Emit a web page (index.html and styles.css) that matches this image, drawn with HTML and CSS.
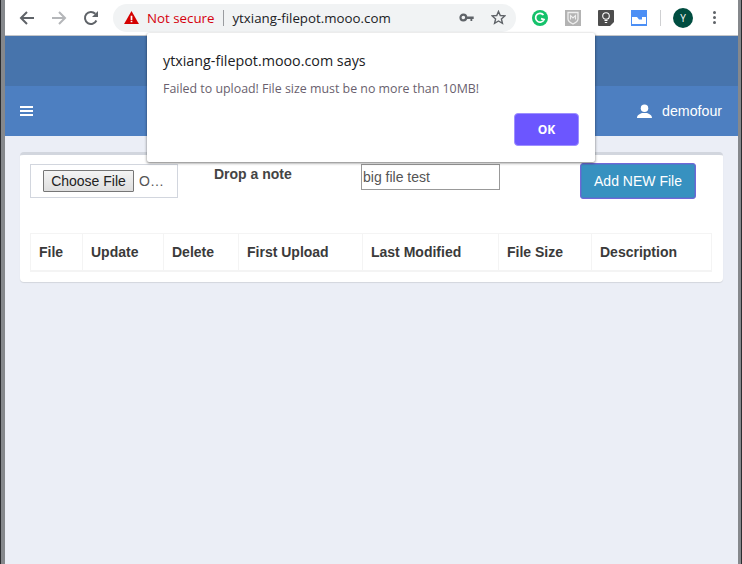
FILE: index.html
```html
<!DOCTYPE html>
<html lang="en">
<head>
  <meta charset="UTF-8" />
  <title>ytxiang-filepot.mooo.com</title>
  <link rel="stylesheet" href="styles.css">
</head>
<body>
  <div class="window">
    <div class="toolbar">
      <svg class="nav" viewBox="0 0 16 16" width="16" height="16"><path d="M15 8H2.5M8 2L2 8l6 6" fill="none" stroke="#5f6368" stroke-width="2"/></svg>
      <svg class="nav" viewBox="0 0 16 16" width="16" height="16"><path d="M1 8h12.5M8 2l6 6-6 6" fill="none" stroke="#b4b6b9" stroke-width="2"/></svg>
      <svg class="nav" viewBox="0 0 16 16" width="16" height="16"><path d="M13.4 10.5A6 6 0 1 1 12.3 3.8" fill="none" stroke="#5f6368" stroke-width="2"/><path d="M15 1v6H9z" fill="#5f6368"/></svg>
      <div class="omnibox">
        <svg class="warn" viewBox="0 0 16 14" width="15" height="13"><path d="M8 0l8 14H0z" fill="#d40000"/><path d="M7.1 5h1.8v4.6H7.1zM7.1 10.5h1.8v1.7H7.1z" fill="#fff"/></svg>
        <span class="not-secure">Not secure</span>
        <span class="url">ytxiang-filepot.mooo.com</span>
        <svg class="key" viewBox="0 0 16 10" width="15" height="9"><circle cx="4.5" cy="5" r="3.2" fill="none" stroke="#5f6368" stroke-width="2.4"/><path d="M8 3.8h8v3h-1.6v2h-2v-2H8z" fill="#5f6368"/></svg>
        <svg class="star" viewBox="0 0 16 16" width="15" height="15"><path d="M8 1.5l1.9 4.4 4.8.4-3.6 3.2 1.1 4.7L8 11.7l-4.2 2.5 1.1-4.7-3.6-3.2 4.8-.4z" fill="none" stroke="#5f6368" stroke-width="1.5"/></svg>
      </div>
      <div class="extensions">
        <svg viewBox="0 0 16 16" width="16" height="16"><circle cx="8" cy="8" r="8" fill="#15c26b"/><path d="M11.5 5A4.4 4.4 0 1 0 12 9.6L9 8.6" fill="none" stroke="#fff" stroke-width="1.7"/></svg>
        <svg viewBox="0 0 16 16" width="16" height="16"><path d="M0 0h16v16H0z" fill="#b3b3b3"/><path d="M3 2.500h10v6.500c0 2.500-2.500 3.800-5 5-2.500-1.200-5-2.500-5-5z" fill="none" stroke="#eee" stroke-width="1.300"/><path d="M5.500 9.500V5.500l2.500 2.500 2.500-2.500v4" fill="none" stroke="#eee" stroke-width="1.100"/></svg>
        <svg viewBox="0 0 16 16" width="16" height="16"><path d="M1 0h14a1 1 0 0 1 1 1v11l-4 4H1a1 1 0 0 1-1-1V1a1 1 0 0 1 1-1z" fill="#4d4d4d"/><circle cx="8" cy="6" r="3.300" fill="none" stroke="#fff" stroke-width="1.100"/><path d="M6.500 10.500h3M6.800 12.500h2.400" stroke="#fff" stroke-width="1.200"/></svg>
        <svg viewBox="0 0 16 16" width="16" height="16"><path d="M0 0h16v16H0z" fill="#4c8ff5"/><path d="M1 7h5l2 2.500h3V7h4v7H1z" fill="#fff"/></svg>
      </div>
      <span class="divider"></span>
      <span class="avatar">Y</span>
      <span class="kebab"><i></i><i></i><i></i></span>
    </div>

    <header class="brand-bar"></header>
    <nav class="user-bar">
      <span class="burger"><i></i><i></i><i></i></span>
      <span class="user">
        <svg viewBox="0 0 16 16" width="15" height="15"><circle cx="8" cy="4.500" r="4" fill="#fff"/><path d="M0 15c0-3.500 3-4.500 5.500-5.500h5C13 10.500 16 11.500 16 15z" fill="#fff"/></svg>
        demofour
      </span>
    </nav>

    <main class="content">
      <section class="card">
        <form class="upload-row">
          <div class="file-box">
            <span class="file-btn">Choose File</span>
            <span class="file-name">O…</span>
          </div>
          <label class="note-label">Drop a note</label>
          <input class="note-input" type="text" value="big file test">
          <button class="add-btn" type="button">Add NEW File</button>
        </form>
        <table class="files">
          <thead>
            <tr>
              <th class="c-file">File</th>
              <th class="c-update">Update</th>
              <th class="c-delete">Delete</th>
              <th class="c-first">First Upload</th>
              <th class="c-last">Last Modified</th>
              <th class="c-size">File Size</th>
              <th>Description</th>
            </tr>
          </thead>
        </table>
      </section>
    </main>

    <div class="dialog">
      <h2>ytxiang-filepot.mooo.com says</h2>
      <p>Failed to upload! File size must be no more than 10MB!</p>
      <div class="dialog-actions"><button type="button">OK</button></div>
    </div>
  </div>
</body>
</html>
```

FILE: styles.css
```css
html, body { margin: 0; height: 100%; }
body { font-family: "Liberation Sans", Arial, sans-serif; background: #2b2d30; overflow: hidden; padding: 0 1px; }
.window { position: relative; height: 564px; box-sizing: border-box; margin: 0; border-left: 4px solid #85888c; border-right: 3px solid #85888c; display: flex; flex-direction: column; background: #ebeef6; }

.toolbar { height: 36px; flex: none; box-sizing: border-box; background: #fff; border-bottom: 1px solid #c4c6c9; display: flex; align-items: center; padding-left: 14px; }
.nav { margin-right: 16px; }
.omnibox { width: 403px; height: 28px; margin-left: -2px; background: #f1f3f4; border-radius: 14px; display: flex; align-items: center; font: 13.3px "Open Sans", sans-serif; padding-left: 11px; box-sizing: border-box; }
.warn { margin-right: 8px; }
.not-secure { color: #d5000d; padding-right: 9px; border-right: 1px solid #9a9ca0; line-height: 16px; margin-right: 8px; }
.url { color: #202124; flex: 1; }
.key { margin-right: 17px; }
.star { margin-right: 10px; }
.extensions { display: flex; gap: 17px; margin-left: 16px; }
.divider { width: 1px; height: 16px; background: #cfd0d2; margin: 0 12px 0 13px; }
.avatar { width: 20px; height: 20px; border-radius: 50%; background: #004d40; color: #fff; font: 10px/20px "Open Sans", sans-serif; text-align: center; }
.kebab { display: flex; flex-direction: column; gap: 2px; margin-left: 20px; }
.kebab i { width: 3px; height: 3px; border-radius: 50%; background: #5f6368; }

.brand-bar { height: 50px; flex: none; background: #4774ac; }
.user-bar { height: 50px; flex: none; background: #4d7fc1; display: flex; align-items: center; justify-content: space-between; padding: 0 16px 0 15px; color: #fff; }
.burger { display: flex; flex-direction: column; gap: 2px; }
.burger i { width: 13px; height: 2px; background: #fff; }
.user { display: flex; align-items: center; gap: 10px; font-size: 14.2px; }

.content { flex: 1; padding: 16px 15px 0; }
.card { height: 130px; box-sizing: border-box; background: #fff; border-top: 3px solid #d2d6de; border-radius: 4px; box-shadow: 0 1px 1px rgba(0, 0, 0, 0.1); padding: 9px 10px 0; }
.upload-row { display: flex; align-items: flex-start; height: 69px; }
.file-box { width: 148px; height: 34px; box-sizing: border-box; border: 1px solid #d2d6de; padding: 6px 0 0 12px; display: flex; align-items: center; font-size: 13.3px; color: #444; }
.file-btn { box-sizing: border-box; height: 22px; width: 91px; line-height: 20px; text-align: center; color: #222; border: 1px solid #767676; border-radius: 1px; background: linear-gradient(#f4f4f4, #dedede); font-size: 14px; margin: -6px 5px 0 0; }
.file-name { margin-top: -6px; font-size: 14px; color: #555; }
.note-label { width: 148px; margin-left: 36px; font-weight: bold; font-size: 14px; color: #444; padding-top: 2px; }
.note-input { width: 139px; height: 26px; box-sizing: border-box; border: 1px solid #999; padding: 0 1px; font: 14px "Liberation Sans", sans-serif; color: #555; outline: none; margin-left: -1px; }
.add-btn { width: 116px; height: 36px; margin: -1px 0 0 80px; box-sizing: border-box; background: #3791c0; color: #fff; border: 1px solid #7067d8; border-radius: 3px; box-shadow: inset 0 0 0 1px rgba(90, 110, 200, 0.5); font: 14px "Liberation Sans", sans-serif; }

.files { border-collapse: collapse; width: 682px; border-bottom: 2px solid #f4f4f4; }
.files th { text-align: left; height: 37px; box-sizing: border-box; padding: 0 8px; border: 1px solid #f4f4f4; font-size: 14px; color: #3a3a3a; }
.c-file { width: 52px; }
.c-update { width: 81px; }
.c-delete { width: 75px; }
.c-first { width: 124px; }
.c-last { width: 136px; }
.c-size { width: 93px; }

.dialog { position: absolute; left: 142px; top: 33px; width: 448px; height: 129px; box-sizing: border-box; background: #fff; border-radius: 2px; box-shadow: 0 1px 3px rgba(0, 0, 0, 0.55); padding: 19px 16px 0; font-family: "Open Sans", sans-serif; }
.dialog h2 { margin: 0; font-size: 14.3px; font-weight: normal; color: #202124; line-height: 18px; }
.dialog p { margin: 10px 0 0; font-size: 12.4px; color: #6a5f6e; line-height: 18px; }
.dialog-actions { display: flex; justify-content: flex-end; margin-top: 15px; }
.dialog button { width: 65px; height: 33px; border: 1px solid #9d8fff; border-radius: 4px; background: #6c56ff; color: #fff; font: bold 12px "Open Sans", sans-serif; }
```
